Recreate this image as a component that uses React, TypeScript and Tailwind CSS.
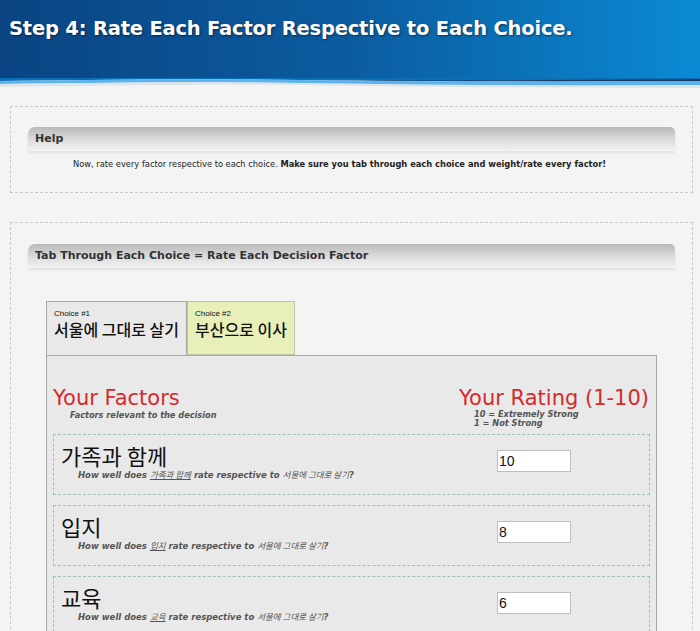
import React from 'react';

const factors = [
  { name: '가족과 함께', rating: '10' },
  { name: '입지', rating: '8' },
  { name: '교육', rating: '6' },
];

const choices = [
  { label: 'Choice #1', name: '서울에 그대로 살기' },
  { label: 'Choice #2', name: '부산으로 이사' },
];

const SectionBar: React.FC<{ title: string }> = ({ title }) => (
  <div className="h-[24px] flex items-center px-[7px] rounded-tl-[7px] rounded-tr-[5px] bg-gradient-to-b from-[#b9b9b9] via-[#dadada] to-[#f3f3f3] shadow-[0_2px_3px_rgba(0,0,0,0.08)]">
    <span className="text-[11px] font-bold text-[#333]">{title}</span>
  </div>
);

const App: React.FC = () => {
  const active = 0;

  return (
    <div className="min-h-[631px] bg-[#f4f4f4] font-['DejaVu_Sans',Verdana,sans-serif] overflow-hidden">
      <header className="relative">
        <div className="h-[80px] bg-gradient-to-r from-[#0a4482] via-[#0b5c9f] to-[#0a8ad4] pt-[14px] pl-[9px]">
          <h1 className="text-[19.5px] font-bold text-white tracking-[-0.2px] [text-shadow:1px_1px_2px_rgba(0,0,0,0.5)]">
            Step 4: Rate Each Factor Respective to Each Choice.
          </h1>
        </div>
        <svg className="block w-full h-[12px] -mt-[2px]" viewBox="0 0 700 12" preserveAspectRatio="none">
          <rect x="0" y="0" width="700" height="12" fill="#f4f4f4" />
          <path d="M0 0 H700 V2 C560 2 420 4 300 2 C180 0 80 2 0 3 Z" fill="#0b6fb8" />
          <path d="M330 2 C460 3 580 2 700 1 V3 C580 4 460 4 330 2 Z" fill="#163a66" />
          <path d="M0 3 C80 2 180 0 300 2 C420 4 560 3 700 3 V7 C560 8 420 7 300 5 C180 3 80 5 0 6 Z" fill="#5db3ea" />
          <path d="M0 6 C80 5 180 3 300 5 C420 7 560 8 700 7 V10 C560 10 420 9 300 7 C180 6 80 8 0 9 Z" fill="#dfe4e8" />
        </svg>
      </header>

      <section className="mt-[16px] ml-[10px] mr-[7px] border border-dashed border-[#c9c9c9] pt-[20px] pb-[22px] pl-[17px] pr-[17px]">
        <SectionBar title="Help" />
        <p className="mt-[8px] pl-[45px] text-[8.3px] leading-[11px] text-[#222]">
          Now, rate every factor respective to each choice.{' '}
          <b>Make sure you tab through each choice and weight/rate every factor!</b>
        </p>
      </section>

      <section className="mt-[29px] ml-[10px] mr-[7px] border border-dashed border-[#c9c9c9] pt-[21px] pl-[17px] pr-[17px] pb-[20px]">
        <SectionBar title="Tab Through Each Choice = Rate Each Decision Factor" />

        <div className="mt-[33px] ml-[18px] mr-[18px]">
          <div className="flex">
            {choices.map((c, i) => (
              <div
                key={c.label}
                className={`h-[54px] pt-[7px] pl-[7px] pr-[7px] border-t border-l border-r ${
                  i === active
                    ? 'bg-[#e9e9e9] border-[#a9a9a9] -mb-px relative z-10'
                    : 'bg-[#e8efb9] border-[#c2c2a8] border-b'
                }`}
              >
                <div className="text-[8px] leading-[10px] text-[#111] font-['Liberation_Sans',Arial,sans-serif]">{c.label}</div>
                <div className="text-[16px] leading-[20px] font-medium text-[#111] font-['Noto_Sans_CJK_KR',sans-serif]">{c.name}</div>
              </div>
            ))}
          </div>

          <div className="bg-[#e9e9e9] border border-[#a9a9a9] px-[6px] pt-[30px] pb-[20px]">
            <div className="flex justify-between items-start">
              <div>
                <div className="text-[21px] leading-[24px] text-[#d52b2b]">Your Factors</div>
                <div className="pl-[17px] text-[8.2px] leading-[10px] font-bold italic text-[#555]">Factors relevant to the decision</div>
              </div>
              <div className="pr-[1px]">
                <div className="text-[21px] leading-[24px] text-[#d52b2b]">Your Rating (1-10)</div>
                <div className="pl-[15px] text-[8.2px] leading-[9px] font-bold italic text-[#555]">
                  <div>10 = Extremely Strong</div>
                  <div>1 = Not Strong</div>
                </div>
              </div>
            </div>

            <div className="mt-[6px] flex flex-col gap-[10px]">
              {factors.map((f) => (
                <div key={f.name} className="h-[61px] border border-dashed border-[#9cc0bf] flex">
                  <div className="flex-1 pl-[7px] pt-[8px]">
                    <div className="text-[22px] leading-[24px] text-[#111] font-['Noto_Sans_CJK_KR',sans-serif]">{f.name}</div>
                    <div className="mt-[2px] pl-[17px] text-[8.5px] leading-[10px] font-bold italic text-[#555]">
                      How well does{' '}
                      <span className="inline-block leading-[10px] underline font-['Noto_Sans_CJK_KR',sans-serif] font-normal">{f.name}</span>{' '}
                      rate respective to{' '}
                      <span className="inline-block leading-[10px] font-['Noto_Sans_CJK_KR',sans-serif] font-normal">서울에 그대로 살기</span>?
                    </div>
                  </div>
                  <div className="w-[152px] pt-[14px]">
                    <input
                      defaultValue={f.rating}
                      className="w-[74px] h-[22px] bg-white border border-[#bdbdbd] px-[1px] text-[14px] text-[#111] font-['Liberation_Sans',Arial,sans-serif] outline-none"
                    />
                  </div>
                </div>
              ))}
            </div>
          </div>
        </div>
      </section>
    </div>
  );
};

export default App;
